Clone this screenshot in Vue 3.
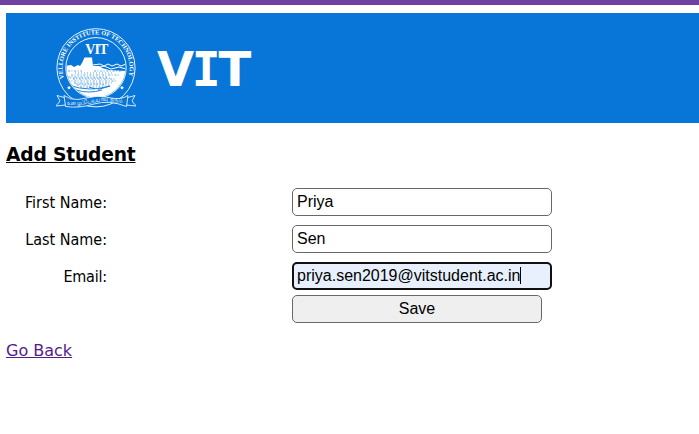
<script setup>
import { ref } from 'vue'

const firstName = ref('Priya')
const lastName = ref('Sen')
const email = ref('priya.sen2019@vitstudent.ac.in')
</script>

<template>
  <div class="page">
    <header class="banner">
      <svg class="crest" viewBox="0 0 80 80" aria-label="Vellore Institute of Technology">
        <defs>
          <path id="motto-ring" d="M8.4 51.3A33.6 33.6 0 1 1 71.6 51.3" />
          <path id="ribbon-line" d="M11 77Q27 77.5 40 74T69 76" />
          <clipPath id="scene"><circle cx="40" cy="40" r="29.5" /></clipPath>
        </defs>
        <g fill="none" stroke="#e5f2fd">
          <circle cx="40" cy="39.8" r="39.1" stroke-width="1" />
          <circle cx="40" cy="39.8" r="30.2" stroke-width="1" />
        </g>
        <text class="ring-text"><textPath href="#motto-ring" startOffset="1" textLength="124" lengthAdjust="spacingAndGlyphs">VELLORE INSTITUTE OF TECHNOLOGY</textPath></text>
        <text class="crest-name" x="40.8" y="26" text-anchor="middle" textLength="23">VIT</text>
        <g clip-path="url(#scene)">
          <path fill="#fff" d="M9 38L15 37 18 39 22 37 24 38 26 35 28.5 29.5 36 29.5 37 38 43 38 46 40 53 42 71 43V71H9Z" />
          <path fill="none" stroke="#fff" stroke-width="1" d="M37 37L44 36 48 38 52 36 56 38 61 36 65 38 70 36M41 40L48 38 55 41 63 39 70 41" />
          <g fill="none" stroke="#0876d8" stroke-width=".65">
            <path stroke-dasharray="2 1.4 1 1.8" d="M12 43H26M38 43H66M15 47H64M12 49H52M17 51H60M12 53H60M18 55H56M21 57H53M24 59H48" />
            <path stroke-dasharray="1 2" d="M19 45H57M14 50H55M20 56H50" />
            <path stroke-width=".9" d="M12 57Q24 61 34 61T54 58Q44 61 42 61.5M20 62Q33 66 46 62M33 59L39 61" />
          </g>
        </g>
        <path fill="#fff" d="M13 57.9l1.8 1.8-1.8 1.8-1.8-1.8ZM66 57.9l1.8 1.8-1.8 1.8-1.8-1.8Z" />
        <path fill="#0876d8" stroke="#cfe6fa" stroke-width="1" d="M10 70L1 67.5 4 73 0 78 10 77M70 70L79 67.5 76 73 80 78 70 77" />
        <path fill="#0876d8" stroke="#e5f2fd" stroke-width=".9" d="M8 67.5L9.5 78.5Q23 80.5 38 76T70.5 78.5L72 67.5Q65 72 55 70T40 68.5T22 71.5Q14 72 8 67.5Z" />
        <text class="ribbon-text"><textPath href="#ribbon-line" textLength="56" lengthAdjust="spacingAndGlyphs">உழைப்பே உயர்வு தரும்</textPath></text>
      </svg>
      <span class="brand">V<span class="slab">I</span>T</span>
    </header>

    <h3>Add Student</h3>

    <form class="form" @submit.prevent>
      <label for="first">First Name:</label>
      <input id="first" v-model="firstName" type="text" />
      <label for="last">Last Name:</label>
      <input id="last" v-model="lastName" type="text" />
      <label for="email" class="mail">Email:</label>
      <div class="field">
        <input id="email" v-model="email" class="active" type="text" />
        <i class="caret"></i>
      </div>
      <button type="submit">Save</button>
    </form>

    <a class="back" href="#">Go Back</a>
  </div>
</template>

<style>
body {
  background: #fff;
  overflow: hidden;
}
</style>

<style scoped>
.page {
  box-sizing: border-box;
  height: 434px;
  padding: 8px 0 0 6px;
  border-top: 5px solid #6f42a1;
  border-image: linear-gradient(#6f42a1 80%, #9472ba 80%) 5;
  border-right: 0;
  border-bottom: 0;
  border-left: 0;
  font-family: Verdana, "DejaVu Sans", sans-serif;
  color: #000;
}

.banner {
  display: flex;
  box-sizing: border-box;
  height: 110px;
  padding: 15px 0 0 50px;
  background: #0876d8;
}

.crest {
  width: 80px;
  height: 80px;
}

.crest-name {
  fill: #fff;
  font: bold 14px "Liberation Serif", serif;
}

.ring-text {
  fill: #fff;
  font: bold 6.2px "Liberation Serif", serif;
}

.ribbon-text {
  fill: #fff;
  font: 6px "Noto Sans", sans-serif;
}

.brand {
  margin: 12px 0 0 21px;
  color: #fff;
  font-size: 48px;
  font-weight: bold;
  line-height: 58px;
}

.slab {
  margin: 0 -2px 0 -2.5px;
  font-family: "DejaVu Sans Mono", monospace;
}

h3 {
  margin: 20px 0 0;
  font-size: 18.7px;
  line-height: 24px;
  letter-spacing: -0.2px;
  text-decoration: underline;
}

.form {
  display: grid;
  grid-template-columns: 101px 260px;
  grid-template-rows: 28px 28px 28px 28px;
  column-gap: 185px;
  row-gap: 9px;
  margin-top: 21px;
}

label {
  font: 16px/30px "DejaVu Sans Condensed", "DejaVu Sans", sans-serif;
  text-align: right;
  white-space: nowrap;
}

.mail {
  letter-spacing: -0.2px;
}

input,
button {
  box-sizing: border-box;
  width: 260px;
  height: 28px;
  border: 1px solid #68686b;
  border-radius: 5px;
  font: 16px "Liberation Sans", Arial, sans-serif;
  color: #000;
}

input {
  display: block;
  margin: 0;
  padding: 1px 4px;
  outline: none;
  background: #fff;
}

.field {
  position: relative;
}

.active {
  padding: 0 3px;
  border: 2px solid #101014;
  background: #e8f0fe;
}

.caret {
  position: absolute;
  top: 5px;
  left: 228px;
  width: 1px;
  height: 17px;
  background: #000;
}

button {
  grid-column: 2;
  width: 250px;
  margin: -4px 0 0;
  padding: 0;
  background: #efefef;
}

.back {
  display: inline-block;
  margin-top: 14px;
  color: #551a8b;
  font-size: 16px;
  line-height: 20px;
}
</style>
